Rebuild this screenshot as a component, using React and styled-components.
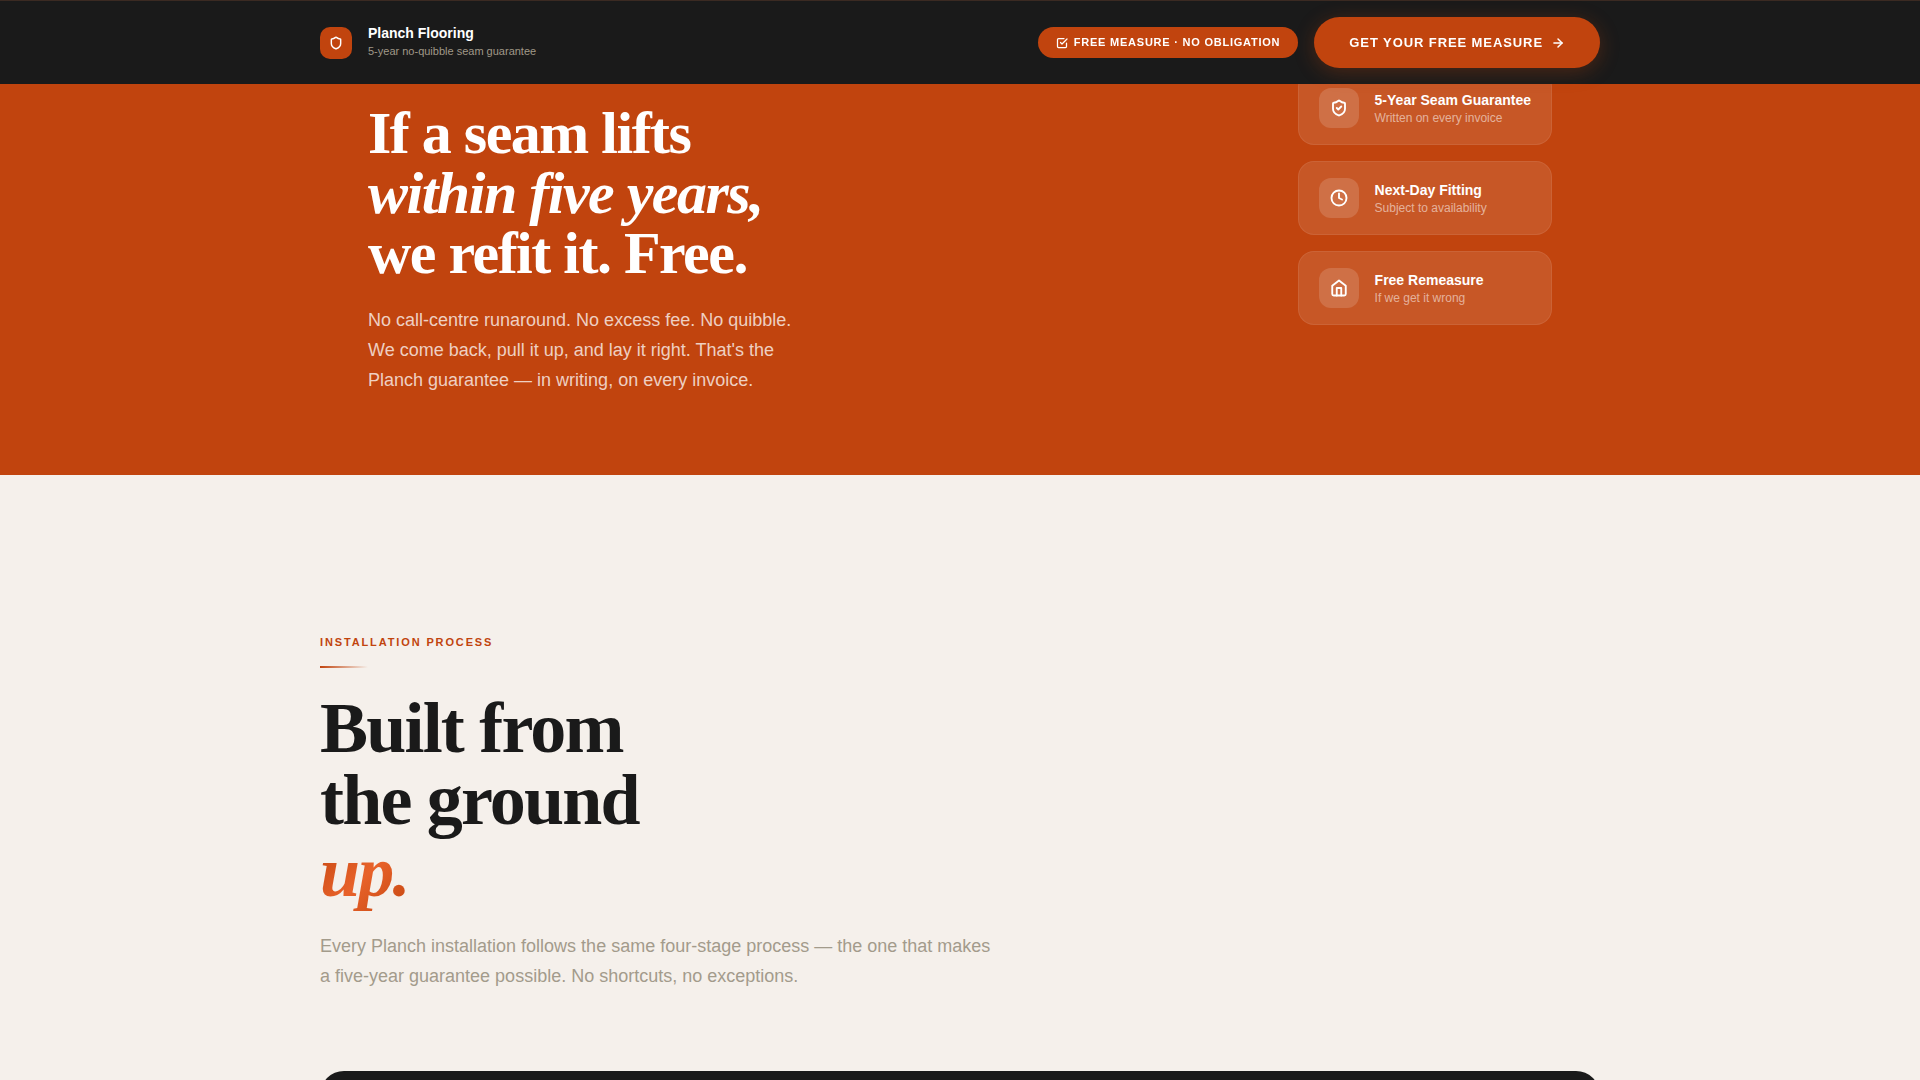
import React from 'react'
import styled, { createGlobalStyle } from 'styled-components'
import { ArrowRight, Clock, Shield, ShieldCheck } from 'lucide-react'
import { FiCheckSquare, FiHome } from 'react-icons/fi'


const GlobalStyle = createGlobalStyle`
    *{
        box-sizing: border-box;
    }
    body{
        margin: 0;
        background-color: #F5F0EB;
        color: #1A1A1A;
        font-family: "Liberation Sans", Arial, sans-serif;
        overflow-x: hidden;
    }
    h2, p{
        margin: 0;
    }
`

const Header = styled.header`
    position: fixed;
    top: 0;
    left: 0;
    right: 0;
    z-index: 10;
    padding: 16px 40px;
    background-color: #1A1A1A;
    border-top: 1px solid #3B2A22;
`

const HeaderInner = styled.div`
    max-width: 1280px;
    margin: 0 auto;
    display: flex;
    align-items: center;
    justify-content: space-between;
`

const Brand = styled.div`
    display: flex;
    align-items: center;
    gap: 16px;
`

const BrandMark = styled.div`
    width: 32px;
    height: 32px;
    border-radius: 10px;
    background-color: #C1440E;
    color: #fff;
    display: flex;
    align-items: center;
    justify-content: center;
`

const BrandName = styled.div`
    font-size: 14px;
    line-height: 16px;
    font-weight: 700;
    color: #fff;
`

const BrandNote = styled.div`
    font-size: 11px;
    line-height: 20px;
    color: #A09888;
`

const Actions = styled.div`
    display: flex;
    align-items: center;
    gap: 16px;
`

const Pill = styled.div`
    display: flex;
    align-items: center;
    gap: 6px;
    padding: 8px 18px;
    border-radius: 999px;
    background-color: #C1440E;
    color: #fff;
    font-size: 11px;
    line-height: 15px;
    font-weight: 700;
    letter-spacing: 0.07em;
    text-transform: uppercase;
`

const CtaButton = styled.button`
    display: flex;
    align-items: center;
    gap: 8px;
    padding: 18px 35px;
    border: none;
    border-radius: 999px;
    background-color: #C1440E;
    color: #fff;
    font-family: inherit;
    font-size: 13px;
    line-height: 15px;
    font-weight: 700;
    letter-spacing: 0.07em;
    text-transform: uppercase;
    box-shadow: 0 4px 20px rgba(193, 68, 14, 0.3);
    cursor: pointer;
`

const Guarantee = styled.section`
    padding: 71px 40px 80px;
    background-color: #C1440E;
`

const GuaranteeInner = styled.div`
    max-width: 1184px;
    margin: 0 auto;
    display: flex;
    align-items: flex-start;
    justify-content: space-between;
`

const GuaranteeText = styled.div`
    padding-top: 32px;
`

const GuaranteeTitle = styled.h2`
    font-family: "Liberation Serif", "Times New Roman", serif;
    font-size: 60px;
    line-height: 60px;
    font-weight: 700;
    letter-spacing: -0.025em;
    color: #fff;
`

const GuaranteeCopy = styled.p`
    max-width: 440px;
    margin-top: 22px;
    font-size: 18px;
    line-height: 30px;
    color: rgba(255, 255, 255, 0.75);
`

const PromiseList = styled.div`
    display: flex;
    flex-direction: column;
    gap: 16px;
`

const PromiseCard = styled.div`
    display: flex;
    align-items: center;
    gap: 16px;
    padding: 16px 20px;
    border: 1px solid rgba(255, 255, 255, 0.08);
    border-radius: 16px;
    background-color: rgba(255, 255, 255, 0.1);
`

const PromiseIcon = styled.div`
    width: 40px;
    height: 40px;
    border-radius: 12px;
    background-color: rgba(255, 255, 255, 0.15);
    color: #fff;
    display: flex;
    align-items: center;
    justify-content: center;
`

const PromiseTitle = styled.div`
    font-size: 14px;
    line-height: 20px;
    font-weight: 700;
    color: #fff;
`

const PromiseNote = styled.div`
    font-size: 12px;
    line-height: 16px;
    color: rgba(255, 255, 255, 0.55);
`

const Process = styled.section`
    padding: 160px 40px;
`

const ProcessInner = styled.div`
    max-width: 1280px;
    margin: 0 auto;
`

const Eyebrow = styled.div`
    font-size: 11px;
    line-height: 15px;
    font-weight: 700;
    letter-spacing: 0.17em;
    text-transform: uppercase;
    color: #C1440E;
`

const Rule = styled.div`
    width: 48px;
    height: 2px;
    margin: 16px 0 24px;
    background: linear-gradient(90deg, #C1440E, transparent);
`

const ProcessTitle = styled.h2`
    font-family: "Liberation Serif", "Times New Roman", serif;
    font-size: 72px;
    line-height: 72px;
    font-weight: 700;
    letter-spacing: -0.025em;
`

const Accent = styled.em`
    padding-bottom: 8px;
    background: linear-gradient(135deg, #C1440E 0%, #E8622A 50%, #C1440E 100%);
    background-clip: text;
    -webkit-background-clip: text;
    color: transparent;
`

const ProcessCopy = styled.p`
    max-width: 680px;
    margin-top: 23px;
    font-size: 18px;
    line-height: 30px;
    color: #A39B8B;
`

const ProcessPanel = styled.div`
    min-height: 480px;
    margin-top: 80px;
    border-radius: 24px;
    background-color: #1A1A1A;
`

const promises = [
    { icon: ShieldCheck, title: '5-Year Seam Guarantee', note: 'Written on every invoice' },
    { icon: Clock, title: 'Next-Day Fitting', note: 'Subject to availability' },
    { icon: FiHome, title: 'Free Remeasure', note: 'If we get it wrong' },
]


const App = () => {
  return (
    <>
    <GlobalStyle/>
    <Header>
        <HeaderInner>
            <Brand>
                <BrandMark><Shield size={14} strokeWidth={2.5}/></BrandMark>
                <div>
                    <BrandName>Planch Flooring</BrandName>
                    <BrandNote>5-year no-quibble seam guarantee</BrandNote>
                </div>
            </Brand>
            <Actions>
                <Pill><FiCheckSquare size={12} strokeWidth={2.5}/>Free measure · No obligation</Pill>
                <CtaButton type="button">Get your free measure <ArrowRight size={14} strokeWidth={2.5}/></CtaButton>
            </Actions>
        </HeaderInner>
    </Header>

    <Guarantee>
        <GuaranteeInner>
            <GuaranteeText>
                <GuaranteeTitle>
                    If a seam lifts<br/>
                    <em>within five years,</em><br/>
                    we refit it. Free.
                </GuaranteeTitle>
                <GuaranteeCopy>
                    No call-centre runaround. No excess fee. No quibble. We come back, pull it up, and lay it right. That's the Planch guarantee — in writing, on every invoice.
                </GuaranteeCopy>
            </GuaranteeText>
            <PromiseList>
                {promises.map(({ icon: Icon, title, note }) => (
                <PromiseCard key={title}>
                    <PromiseIcon><Icon size={18} strokeWidth={2.5}/></PromiseIcon>
                    <div>
                        <PromiseTitle>{title}</PromiseTitle>
                        <PromiseNote>{note}</PromiseNote>
                    </div>
                </PromiseCard>
                ))}
            </PromiseList>
        </GuaranteeInner>
    </Guarantee>

    <Process>
        <ProcessInner>
            <Eyebrow>Installation process</Eyebrow>
            <Rule/>
            <ProcessTitle>
                Built from<br/>
                the ground<br/>
                <Accent>up.</Accent>
            </ProcessTitle>
            <ProcessCopy>
                Every Planch installation follows the same four-stage process — the one that makes a five-year guarantee possible. No shortcuts, no exceptions.
            </ProcessCopy>
            <ProcessPanel/>
        </ProcessInner>
    </Process>
    </>
  )
}

export default App
